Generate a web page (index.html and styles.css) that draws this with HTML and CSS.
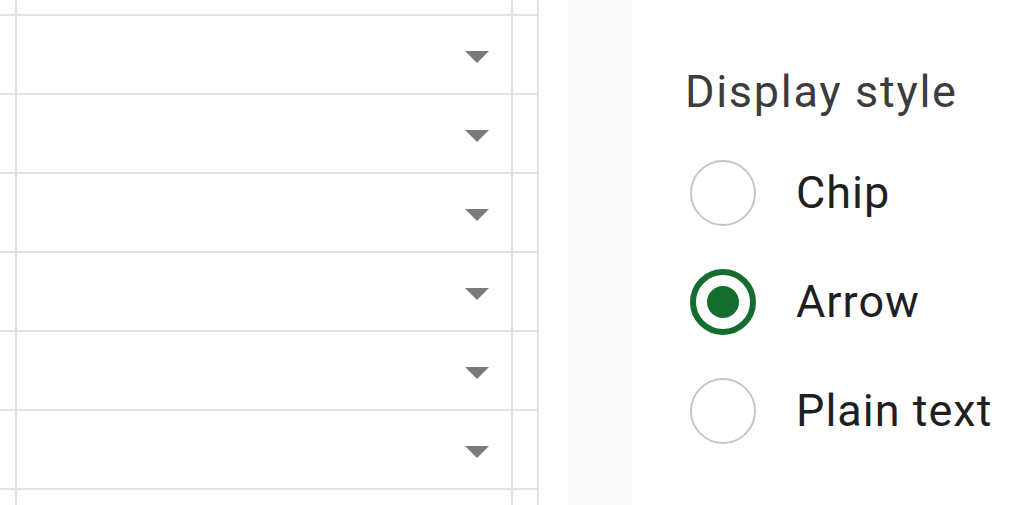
FILE: index.html
```html
<!DOCTYPE html>
<html>
<head>
<meta charset="utf-8">
<link rel="stylesheet" href="styles.css">
</head>
<body>
<div class="page">
  <div class="sheet">
    <div class="cell c1 r0"></div><div class="cell c2 r0"></div><div class="cell c3 r0"></div>
    <div class="cell c1"></div><div class="cell c2"><span class="caret"></span></div><div class="cell c3"></div>
    <div class="cell c1"></div><div class="cell c2"><span class="caret"></span></div><div class="cell c3"></div>
    <div class="cell c1"></div><div class="cell c2"><span class="caret"></span></div><div class="cell c3"></div>
    <div class="cell c1"></div><div class="cell c2"><span class="caret"></span></div><div class="cell c3"></div>
    <div class="cell c1"></div><div class="cell c2"><span class="caret"></span></div><div class="cell c3"></div>
    <div class="cell c1"></div><div class="cell c2"><span class="caret"></span></div><div class="cell c3"></div>
    <div class="cell c1 last"></div><div class="cell c2 last"></div><div class="cell c3 last"></div>
  </div>
  <div class="gap"></div>
  <div class="band"></div>
  <div class="panel">
    <div class="heading">Display style</div>
    <div class="options">
      <label class="option"><span class="radio"></span><span class="label">Chip</span></label>
      <label class="option"><span class="radio checked"></span><span class="label">Arrow</span></label>
      <label class="option"><span class="radio"></span><span class="label">Plain text</span></label>
    </div>
  </div>
</div>
</body>
</html>
```
FILE: styles.css
```css
html, body {
  margin: 0;
  padding: 0;
  background: #ffffff;
}
.page {
  display: flex;
  width: 1022px;
  height: 505px;
  overflow: hidden;
  font-family: Roboto, "Liberation Sans", sans-serif;
}
.sheet {
  display: grid;
  grid-template-columns: 17px 496px 26px;
  grid-template-rows: 16px repeat(6, 79px) 30px;
  flex: 0 0 539px;
  align-content: start;
}
.cell {
  box-sizing: border-box;
  border-right: 2px solid #e2e2e2;
  border-bottom: 2px solid #e2e2e2;
}
.cell.last {
  border-bottom: none;
}
.c2 {
  display: flex;
  align-items: center;
  justify-content: flex-end;
  padding-right: 22px;
  padding-top: 4px;
}
.caret {
  width: 0;
  height: 0;
  border-left: 12px solid transparent;
  border-right: 12px solid transparent;
  border-top: 12px solid #7a7a7a;
}
.gap {
  flex: 0 0 29px;
}
.band {
  flex: 0 0 64px;
  background: #f9f9f9;
}
.panel {
  flex: 1;
  padding-left: 53px;
  padding-top: 64px;
}
.heading {
  font-size: 45px;
  line-height: 56px;
  letter-spacing: 1.7px;
  color: #3c3c3c;
}
.options {
  display: flex;
  flex-direction: column;
  gap: 43px;
  margin-top: 40px;
  padding-left: 5px;
}
.option {
  display: flex;
  align-items: center;
  gap: 40px;
  height: 66px;
}
.radio {
  box-sizing: border-box;
  width: 66px;
  height: 66px;
  border-radius: 50%;
  border: 2px solid #c6c6c6;
  display: flex;
  align-items: center;
  justify-content: center;
}
.radio.checked {
  border: 6px solid #146c2e;
}
.radio.checked::after {
  content: "";
  width: 32px;
  height: 32px;
  border-radius: 50%;
  background: #146c2e;
}
.label {
  font-size: 45px;
  color: #1f1f1f;
  line-height: 56px;
  letter-spacing: 1px;
}
```
